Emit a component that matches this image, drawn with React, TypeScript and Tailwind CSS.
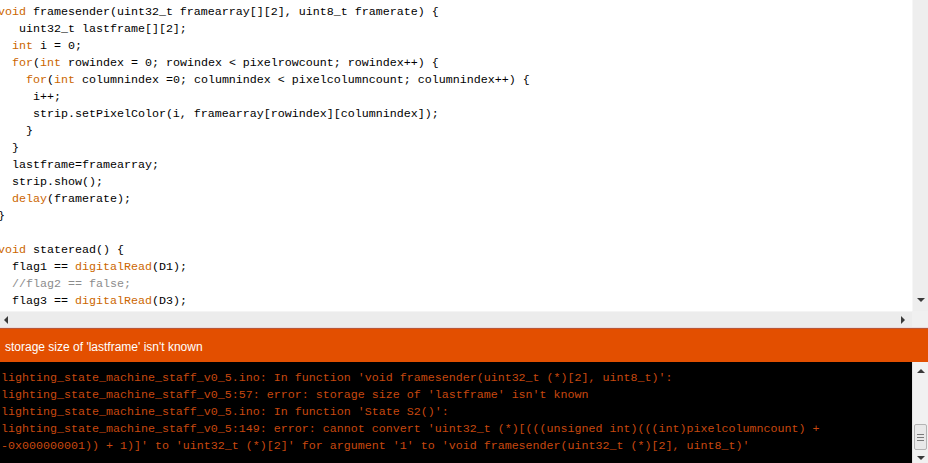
import React from 'react';

type Tok = { t: string; c?: 'k' | 'm' };

// one line of the sketch = list of tokens, k = keyword (orange), m = comment (gray)
const code: Tok[][] = [
  [{ t: 'void', c: 'k' }, { t: ' framesender(uint32_t framearray[][2], uint8_t framerate) {' }],
  [{ t: '   uint32_t lastframe[][2];' }],
  [{ t: '  ' }, { t: 'int', c: 'k' }, { t: ' i = 0;' }],
  [{ t: '  ' }, { t: 'for', c: 'k' }, { t: '(' }, { t: 'int', c: 'k' }, { t: ' rowindex = 0; rowindex < pixelrowcount; rowindex++) {' }],
  [{ t: '    ' }, { t: 'for', c: 'k' }, { t: '(' }, { t: 'int', c: 'k' }, { t: ' columnindex =0; columnindex < pixelcolumncount; columnindex++) {' }],
  [{ t: '     i++;' }],
  [{ t: '     strip.setPixelColor(i, framearray[rowindex][columnindex]);' }],
  [{ t: '    }' }],
  [{ t: '  }' }],
  [{ t: '  lastframe=framearray;' }],
  [{ t: '  strip.show();' }],
  [{ t: '  ' }, { t: 'delay', c: 'k' }, { t: '(framerate);' }],
  [{ t: '}' }],
  [{ t: '' }],
  [{ t: 'void', c: 'k' }, { t: ' stateread() {' }],
  [{ t: '  flag1 == ' }, { t: 'digitalRead', c: 'k' }, { t: '(D1);' }],
  [{ t: '  ' }, { t: '//flag2 == false;', c: 'm' }],
  [{ t: '  flag3 == ' }, { t: 'digitalRead', c: 'k' }, { t: '(D3);' }],
];

const consoleLines = [
  "lighting_state_machine_staff_v0_5.ino: In function 'void framesender(uint32_t (*)[2], uint8_t)':",
  "lighting_state_machine_staff_v0_5:57: error: storage size of 'lastframe' isn't known",
  "lighting_state_machine_staff_v0_5.ino: In function 'State S2()':",
  "lighting_state_machine_staff_v0_5:149: error: cannot convert 'uint32_t (*)[(((unsigned int)(((int)pixelcolumncount) +",
  "-0x000000001)) + 1)]' to 'uint32_t (*)[2]' for argument '1' to 'void framesender(uint32_t (*)[2], uint8_t)'",
];

const Arrow = ({ dir }: { dir: 'up' | 'down' | 'left' | 'right' }) => {
  const pts = {
    up: '0,5 4,1 8,5',
    down: '0,1 8,1 4,5',
    left: '5,0 5,8 1,4',
    right: '1,0 1,8 5,4',
  }[dir];
  const w = dir === 'up' || dir === 'down' ? 8 : 6;
  const h = dir === 'up' || dir === 'down' ? 6 : 8;
  return (
    <svg width={w} height={h} viewBox={`0 0 ${w} ${h}`}>
      <polygon points={pts} fill="#3a3a3a" />
    </svg>
  );
};

export default function App() {
  return (
    <div className="w-[928px] h-[463px] flex flex-col overflow-hidden bg-white">
      {/* Editor */}
      <div className="h-[311px] flex">
        <div className="flex-1 overflow-hidden pt-[4px] font-['Liberation_Mono',monospace] text-[11.67px] leading-[17px] text-black">
          <div className="-ml-[2px]">
            {code.map((line, i) => (
              <div key={i} className="whitespace-pre h-[17px]">
                {line.map((tok, j) => (
                  <span
                    key={j}
                    className={
                      tok.c === 'k' ? 'text-[#cc6600]' : tok.c === 'm' ? 'text-[#8c8c8c]' : ''
                    }
                  >
                    {tok.t}
                  </span>
                ))}
              </div>
            ))}
          </div>
        </div>
        <div className="w-[16px] bg-[#eeeeee] border-l border-[#f6f6f6] flex flex-col justify-end items-center pb-[8px]">
          <Arrow dir="down" />
        </div>
      </div>

      {/* Horizontal scrollbar */}
      <div className="h-[17px] flex border-b border-[#eadcdc]">
        <div className="flex-1 bg-[#ececec] border-t border-[#f4f4f4] flex items-center justify-between pl-[3px] pr-[6px]">
          <Arrow dir="left" />
          <Arrow dir="right" />
        </div>
        <div className="w-[16px] bg-[#f0f0f0]" />
      </div>

      {/* Status bar */}
      <div className="h-[34px] bg-[#e34f00] border-t border-[#b8573a] flex items-center pl-[5px] pt-[3px] font-['Liberation_Sans',Arial,sans-serif] text-[12px] text-white">
        storage size of 'lastframe' isn't known
      </div>

      {/* Console */}
      <div className="flex-1 flex bg-black">
        <div className="flex-1 overflow-hidden pt-[8px] pl-[1px] font-['Liberation_Mono',monospace] text-[11.67px] leading-[17px] text-[#c8480f]">
          {consoleLines.map((l, i) => (
            <div key={i} className="whitespace-pre h-[17px]">
              {l}
            </div>
          ))}
        </div>
        <div className="w-[16px] bg-[#f1f1f1] border-l border-[#e4e4e4] flex flex-col items-center pt-[6px] pb-[2px]">
          <Arrow dir="up" />
          <div className="mt-[50px] w-[13px] h-[26px] bg-[#e9e9e9] border border-[#b4b4b4] rounded-[2px] flex flex-col items-center justify-center gap-[2px]">
            <div className="w-[7px] h-px bg-[#7a7a7a]" />
            <div className="w-[7px] h-px bg-[#7a7a7a]" />
            <div className="w-[7px] h-px bg-[#7a7a7a]" />
          </div>
          <div className="mt-auto">
            <Arrow dir="down" />
          </div>
        </div>
      </div>
    </div>
  );
}
